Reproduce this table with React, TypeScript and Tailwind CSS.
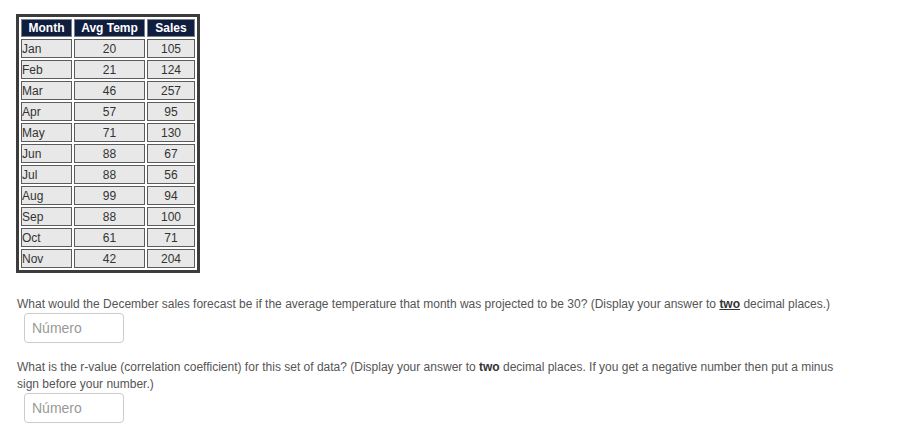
import React from "react";

type Row = { month: string; temp: number; sales: number };

const ROWS: Row[] = [
  { month: "Jan", temp: 20, sales: 105 },
  { month: "Feb", temp: 21, sales: 124 },
  { month: "Mar", temp: 46, sales: 257 },
  { month: "Apr", temp: 57, sales: 95 },
  { month: "May", temp: 71, sales: 130 },
  { month: "Jun", temp: 88, sales: 67 },
  { month: "Jul", temp: 88, sales: 56 },
  { month: "Aug", temp: 99, sales: 94 },
  { month: "Sep", temp: 88, sales: 100 },
  { month: "Oct", temp: 61, sales: 71 },
  { month: "Nov", temp: 42, sales: 204 },
];

function NumberInput() {
  return (
    <input
      type="text"
      placeholder="Número"
      className="ml-[8px] block h-[30px] w-[100px] rounded-[4px] border border-[#cccccc] bg-white px-[7px] text-[14px] text-[#555] placeholder:text-[#999] outline-none"
    />
  );
}

function DataTable() {
  const th = "h-[18px] bg-[#0f1d3f] border border-[#7a7f8c] p-0 text-center text-[12px] font-bold leading-none text-white";
  const td = "h-[19px] bg-[#e8e8e8] border border-[#5c5c5c] p-0 text-[12px] leading-none text-[#333]";
  return (
    <table className="border-separate border-spacing-[2px] border-[3px] border-[#3c3c3c]">
      <thead>
        <tr>
          <th className={`${th} w-[51px]`}>Month</th>
          <th className={`${th} w-[71px]`}>Avg Temp</th>
          <th className={`${th} w-[48px]`}>Sales</th>
        </tr>
      </thead>
      <tbody>
        {ROWS.map((r) => (
          <tr key={r.month}>
            <td className={`${td} text-left`}>{r.month}</td>
            <td className={`${td} text-center`}>{r.temp}</td>
            <td className={`${td} text-center`}>{r.sales}</td>
          </tr>
        ))}
      </tbody>
    </table>
  );
}

export default function App() {
  return (
    <div
      className="min-h-[436px] bg-white pl-[16px] pt-[14px] text-[12px] leading-[17px] text-[#555]"
      style={{ fontFamily: '"Liberation Sans", Arial, sans-serif' }}
    >
      <DataTable />

      <div className="mt-[23px] w-[830px]">
        <p className="pl-[1px]">
          What would the December sales forecast be if the average temperature that month was projected to be 30?
          (Display your answer to <b className="font-bold text-[#333] underline">two</b> decimal places.)
        </p>
        <div className="mt-[0px]">
          <NumberInput />
        </div>
      </div>

      <div className="mt-[16px] w-[830px]">
        <p className="pl-[1px]">
          What is the r-value (correlation coefficient) for this set of data? (Display your answer to{" "}
          <b className="font-bold text-[#333]">two</b> decimal places. If you get a negative number then put a minus
          sign before your number.)
        </p>
        <div className="mt-[0px]">
          <NumberInput />
        </div>
      </div>
    </div>
  );
}
